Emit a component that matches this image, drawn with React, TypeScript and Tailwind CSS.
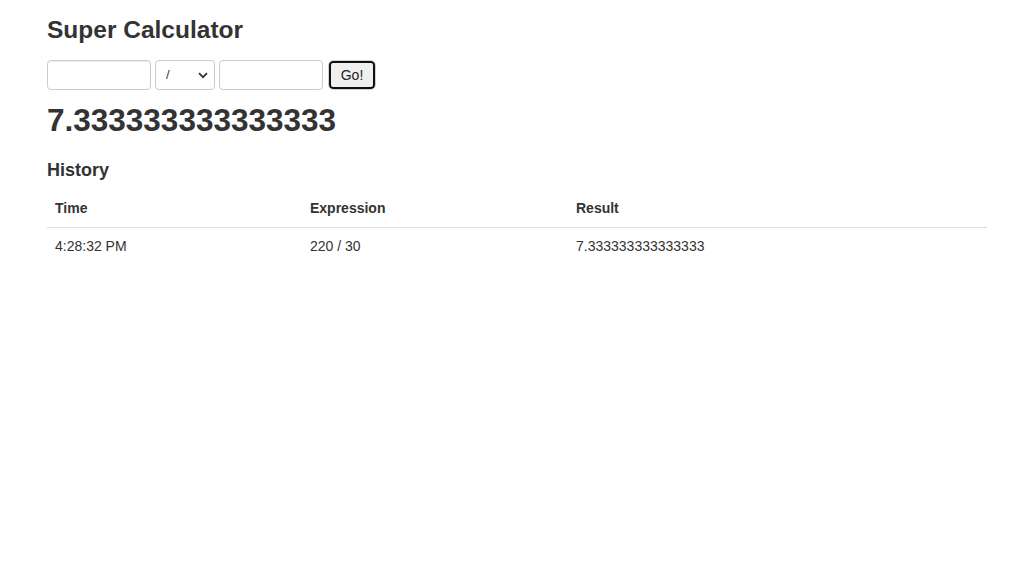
export default function App() {
  const rows = [{ time: "4:28:32 PM", expr: "220 / 30", result: "7.333333333333333" }];

  return (
    <div className="min-h-screen bg-white text-[#333] text-[14px] leading-[20px]" style={{ fontFamily: '"Liberation Sans", Arial, sans-serif' }}>
      <div className="w-[970px] mx-auto px-[15px]">
        <h3 className="mt-[17px] mb-[17px] text-[24.5px] leading-[26px] font-bold">Super Calculator</h3>
        <form className="flex items-center gap-[4px]" onSubmit={(e) => e.preventDefault()}>
          <input className="w-[104px] h-[30px] border border-[#ccc] rounded-[4px] px-2 shadow-[inset_0_1px_1px_rgba(0,0,0,0.075)]" />
          <div className="relative">
            <select defaultValue="/" className="appearance-none w-[60px] h-[30px] border border-[#ccc] rounded-[4px] pl-[10px] text-[13px] text-[#333] bg-white">
              <option>+</option>
              <option>-</option>
              <option>*</option>
              <option>/</option>
            </select>
            <svg className="absolute right-[7px] top-[12px] pointer-events-none" width="10" height="7" viewBox="0 0 10 7">
              <path d="M1 1.2 L5 5.2 L9 1.2" fill="none" stroke="#333" strokeWidth="1.8" />
            </svg>
          </div>
          <input className="w-[104px] h-[30px] border border-[#ccc] rounded-[4px] px-2" />
          <button type="submit" className="ml-[2px] h-[28px] w-[46px] bg-[#efefef] border-2 border-[#101010] rounded-[4px] outline outline-1 outline-[#d0d0d0] text-[14px] text-[#222]">
            Go!
          </button>
        </form>
        <h2 className="mt-[12px] mb-[22px] text-[31.5px] leading-[36px] font-bold">7.333333333333333</h2>
        <h4 className="mb-[10px] text-[18px] leading-[20px] font-bold">History</h4>
        <table className="w-full border-collapse">
          <thead>
            <tr className="border-b border-[#ddd]">
              <th className="w-[255px] text-left px-[8px] pt-[8px] pb-[9px] text-[14px] font-bold">Time</th>
              <th className="w-[266px] text-left px-[8px] pt-[8px] pb-[9px] text-[14px] font-bold">Expression</th>
              <th className="text-left px-[8px] pt-[8px] pb-[9px] text-[14px] font-bold">Result</th>
            </tr>
          </thead>
          <tbody>
            {rows.map((r) => (
              <tr key={r.time}>
                <td className="px-[8px] py-[8px]">{r.time}</td>
                <td className="px-[8px] py-[8px]">{r.expr}</td>
                <td className="px-[8px] py-[8px]">{r.result}</td>
              </tr>
            ))}
          </tbody>
        </table>
      </div>
    </div>
  );
}
